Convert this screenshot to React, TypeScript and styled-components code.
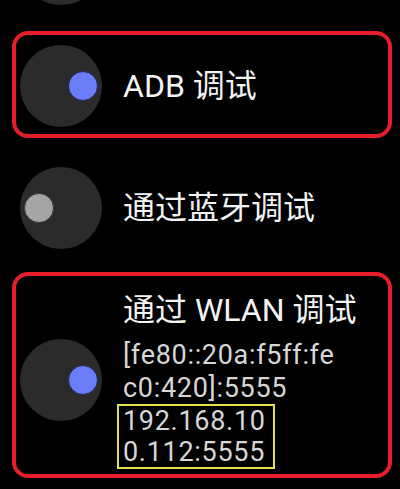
import React from "react";
import styled, { createGlobalStyle } from "styled-components";

const Global = createGlobalStyle`
  html, body {
    margin: 0;
    padding: 0;
    background: #000;
  }
  body {
    width: 400px;
    height: 489px;
    overflow: hidden;
    font-family: Roboto, "Noto Sans CJK SC", "Noto Sans", sans-serif;
  }
`;

const List = styled.div`
  display: flex;
  flex-direction: column;
  gap: 15px;
  margin-top: -91px;
`;

const Option = styled.div<{ $framed?: boolean; $shift?: number }>`
  display: flex;
  align-items: center;
  gap: 21px;
  margin: ${(p) => p.$shift ?? 0}px 8px 0 12px;
  padding: 10px 0 7px 4px;
  border: 4px solid ${(p) => (p.$framed ? "#e61e2b" : "transparent")};
  border-radius: 16px;
`;

const TallOption = styled(Option)`
  padding-top: 14px;
  padding-bottom: 5px;
`;

const Track = styled.div<{ $on?: boolean }>`
  flex: 0 0 auto;
  width: 82px;
  height: 82px;
  box-sizing: border-box;
  border-radius: 50%;
  background: #2b2b2b;
  display: flex;
  align-items: center;
  justify-content: ${(p) => (p.$on ? "flex-end" : "flex-start")};
  padding: 0 4px;
`;

const Knob = styled.div<{ $on?: boolean }>`
  width: 30px;
  height: 30px;
  box-sizing: border-box;
  border-radius: 50%;
  background: ${(p) => (p.$on ? "#6a7cf6" : "#a5a5a5")};
  border: 1px solid ${(p) => (p.$on ? "#23285a" : "#3a3a3a")};
`;

const TextBlock = styled.div`
  display: flex;
  flex-direction: column;
`;

const Title = styled.div`
  font-size: 32px;
  line-height: 40px;
  color: #f3f3f3;
  white-space: nowrap;
`;

const Sub = styled.div`
  font-size: 27px;
  letter-spacing: 0.7px;
  line-height: 33px;
  color: #d6d6d6;
  white-space: nowrap;
`;

const SubGroup = styled.div`
  margin-top: 9px;
  display: flex;
  flex-direction: column;
`;

const Highlight = styled.div`
  align-self: flex-start;
  margin: -1px 0 0 -6px;
  padding: 0 7px 0 4px;
  border: 2px solid #e4df4c;
  display: flex;
  flex-direction: column;
`;

const HiLine = styled(Sub)`
  line-height: 30.5px;
`;

const Switch = ({ on }: { on?: boolean }) => (
  <Track $on={on}>
    <Knob $on={on} />
  </Track>
);

export default function App() {
  return (
    <>
      <Global />
      <List>
        <Option>
          <Switch on />
        </Option>
        <Option $framed>
          <Switch on />
          <TextBlock>
            <Title>ADB 调试</Title>
          </TextBlock>
        </Option>
        <Option>
          <Switch />
          <TextBlock>
            <Title>通过蓝牙调试</Title>
          </TextBlock>
        </Option>
        <TallOption $framed $shift={-3}>
          <Switch on />
          <TextBlock>
            <Title>通过 WLAN 调试</Title>
            <SubGroup>
              <Sub>[fe80::20a:f5ff:fe</Sub>
              <Sub>c0:420]:5555</Sub>
              <Highlight>
                <HiLine>192.168.10</HiLine>
                <HiLine>0.112:5555</HiLine>
              </Highlight>
            </SubGroup>
          </TextBlock>
        </TallOption>
      </List>
    </>
  );
}
